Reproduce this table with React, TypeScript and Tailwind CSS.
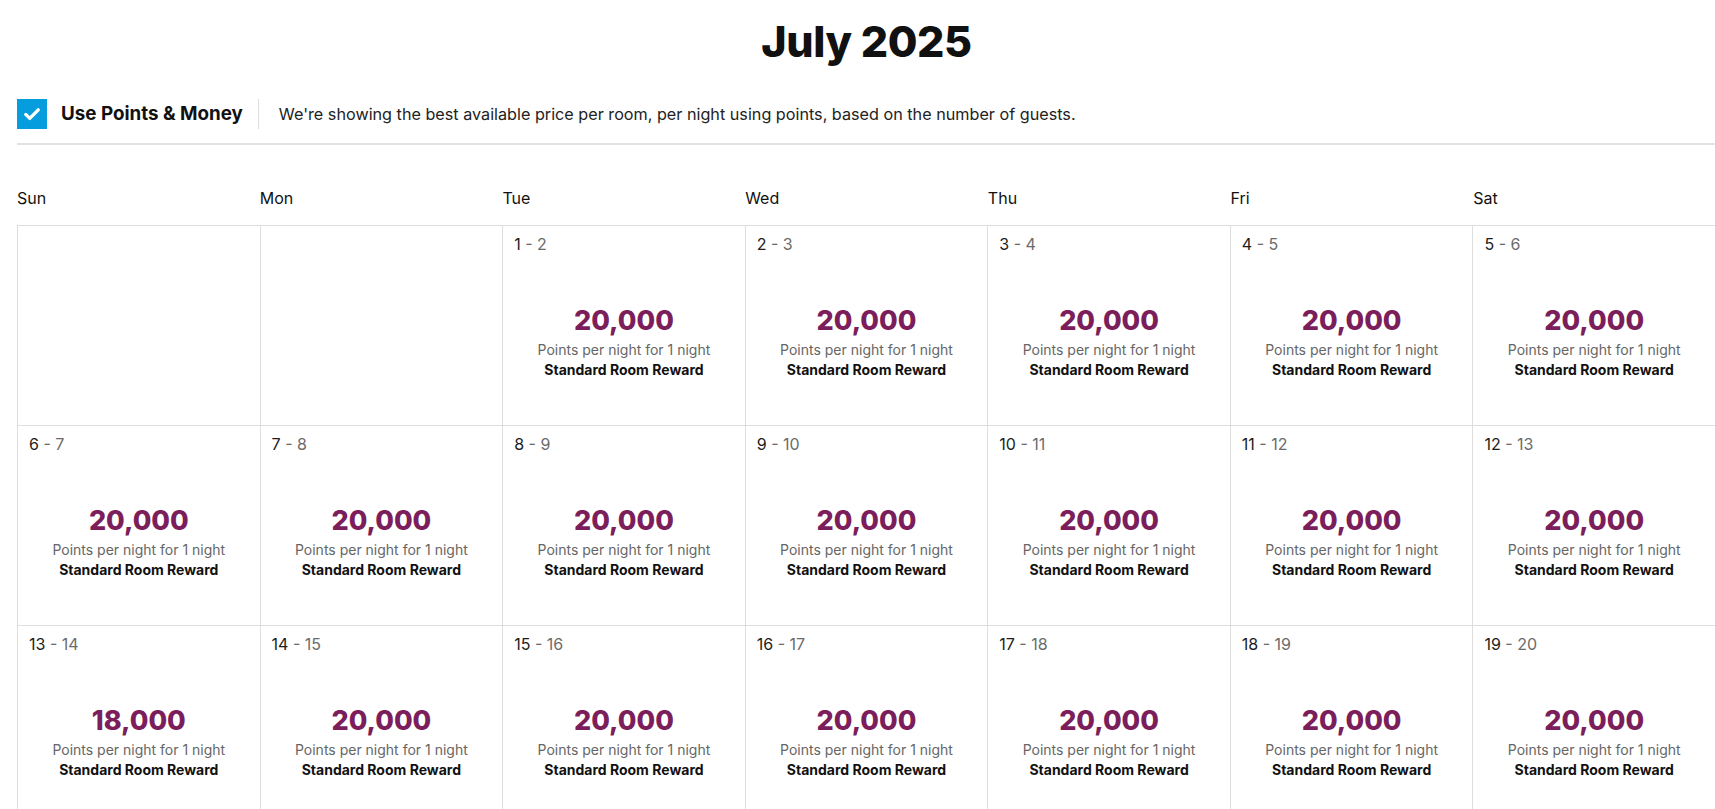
import React from 'react';

/**
 * Reward calendar - July 2025
 */

type Day = { from: number; to: number; points: string } | null;

const weekdays = ['Sun', 'Mon', 'Tue', 'Wed', 'Thu', 'Fri', 'Sat'];

const days: Day[] = [
  null,
  null,
  ...Array.from({ length: 19 }, (_, i) => ({
    from: i + 1,
    to: i + 2,
    points: i + 1 === 13 ? '18,000' : '20,000',
  })),
];

function DayCell({ day }: { day: Day }) {
  return (
    <div className="h-[200px] border-r border-b border-[#dedede] flex flex-col">
      {day && (
        <>
          <div className="pl-[11px] pt-[6px] text-[16px] leading-6">
            <span className="text-[#1c1c1c]">{day.from}</span>
            <span className="text-[#6b6b6b]"> - {day.to}</span>
          </div>
          <div className="flex-1 flex flex-col items-center justify-center pt-[3px]">
            <div className="text-[27px] leading-8 font-extrabold text-[#7b1e5b] tracking-[0px]">
              {day.points}
            </div>
            <div className="text-[14px] leading-5 text-[#666666] mt-[3px]">
              Points per night for 1 night
            </div>
            <div className="text-[14px] leading-5 font-bold text-[#111111]">
              Standard Room Reward
            </div>
          </div>
        </>
      )}
    </div>
  );
}

export default function App() {
  return (
    <div
      className="h-screen w-full overflow-hidden bg-white text-[#111111]"
      style={{ fontFamily: 'Inter, "Liberation Sans", Arial, sans-serif' }}
    >
      <div className="ml-[17px] w-[1699px]">
        <h1 className="text-center text-[43px] leading-[52px] font-extrabold tracking-[-0.4px] pt-[15px] text-[#111111]">
          July 2025
        </h1>

        <div className="mt-[32px] flex items-center h-[30px]">
          <div className="w-[30px] h-[30px] bg-[#059ddd] flex items-center justify-center">
            <svg width="20" height="20" viewBox="0 0 24 24" fill="none">
              <path
                d="M4.5 12.5l4.8 4.8L19.5 7"
                stroke="white"
                strokeWidth="4"
                strokeLinecap="round"
                strokeLinejoin="round"
              />
            </svg>
          </div>
          <span className="ml-[14px] text-[18.8px] font-bold text-[#111111]">
            Use Points &amp; Money
          </span>
          <div className="ml-[15px] w-px h-[30px] bg-[#dedede]" />
          <p className="ml-[20px] text-[16.2px] text-[#222222]">
            We&apos;re showing the best available price per room, per night using points, based on the
            number of guests.
          </p>
        </div>

        <div className="mt-[14px] border-t-2 border-[#e2e2e2]" />

        <div className="grid grid-cols-7 mt-[41px] mb-[15px]">
          {weekdays.map((d) => (
            <div key={d} className="text-[16px] leading-6 text-[#111111]">
              {d}
            </div>
          ))}
        </div>

        <div className="grid grid-cols-7 border-l border-t border-[#dedede]">
          {days.map((day, i) => (
            <DayCell key={i} day={day} />
          ))}
        </div>
      </div>
    </div>
  );
}
